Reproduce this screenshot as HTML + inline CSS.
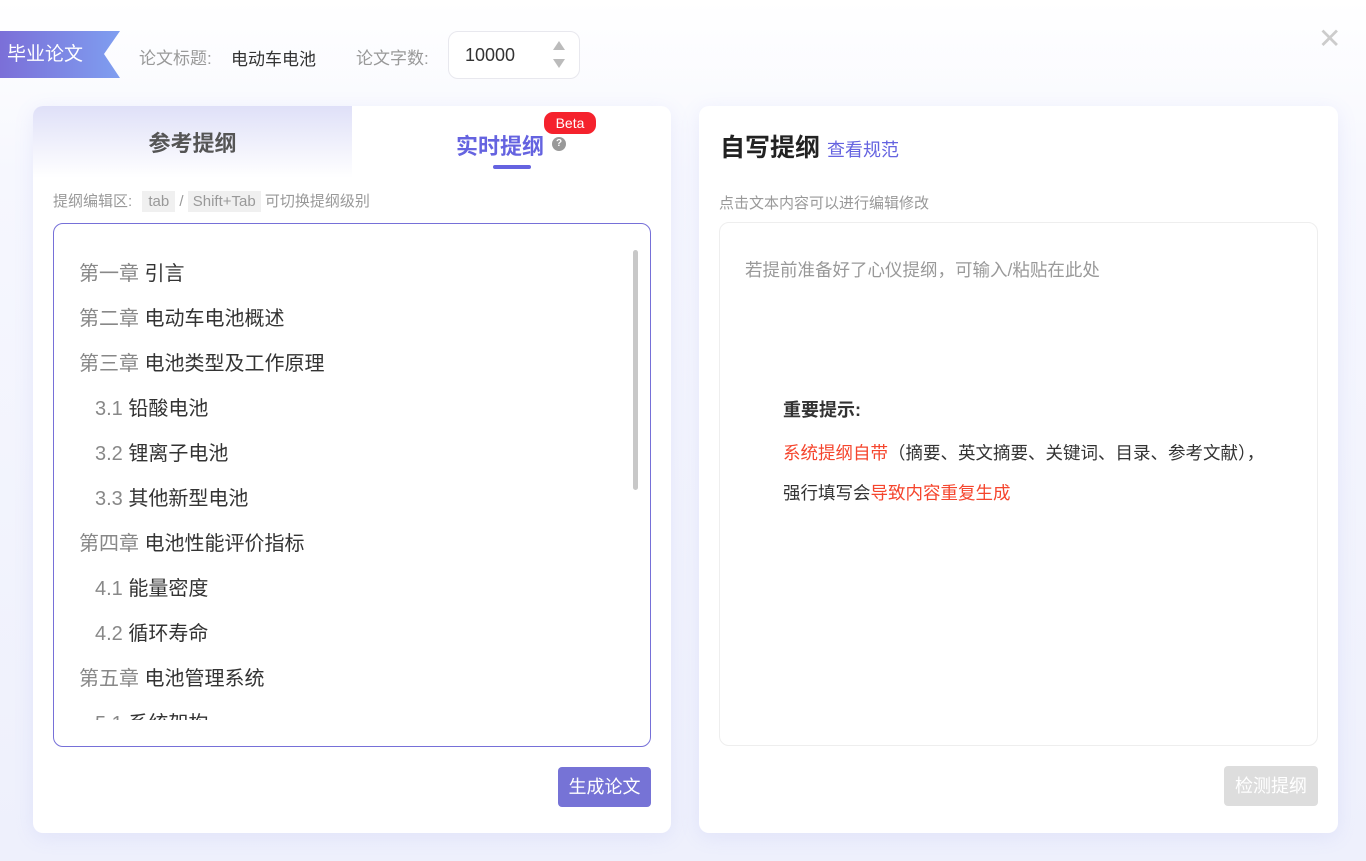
<!DOCTYPE html>
<html><head><meta charset="utf-8"><style>
*{margin:0;padding:0;box-sizing:border-box}
body{width:1366px;height:861px;overflow:hidden;font-family:"Liberation Sans","Noto Sans CJK SC",sans-serif;background:linear-gradient(180deg,#fff 0%,#f6f7fe 20%,#eef0fc 100%);position:relative;color:#333}
.abs{position:absolute}
.tag{left:0;top:31px;width:120px;height:47px;background:linear-gradient(90deg,#7b6fd8,#7f9ef0);color:#fff;font-size:19px;line-height:47px;padding-left:7px;clip-path:polygon(0 0,120px 0,104px 23px,120px 47px,0 47px)}
.lbl{font-size:17px;color:#999;top:44px}
.panel{background:#fff;border-radius:10px;box-shadow:0 4px 20px rgba(120,130,230,.12)}
.line{position:absolute;left:25px;font-size:20px;color:#333}
.line span{color:#888}
.sub{left:41px}
</style></head><body>
<div class="abs tag">毕业论文</div>
<div class="abs lbl" style="left:139px">论文标题:</div>
<div class="abs" style="left:231px;top:45px;font-size:17px;color:#333">电动车电池</div>
<div class="abs lbl" style="left:356px">论文字数:</div>
<div class="abs" style="left:448px;top:31px;width:132px;height:48px;border:1px solid #e8e8ee;border-radius:10px;background:#fff">
 <div class="abs" style="left:16px;top:13px;font-size:18px;color:#333">10000</div>
 <div class="abs" style="left:104px;top:9px;width:0;height:0;border:6px solid transparent;border-bottom:9px solid #bbb;border-top:0"></div>
 <div class="abs" style="left:104px;top:27px;width:0;height:0;border:6px solid transparent;border-top:9px solid #bbb;border-bottom:0"></div>
</div>
<div class="abs" style="left:1318px;top:28px;font-size:28px;color:#ccc;line-height:22px">✕</div>

<div class="abs panel" style="left:33px;top:106px;width:638px;height:727px;overflow:hidden">
 <div class="abs" style="left:0;top:0;width:319px;height:72px;background:linear-gradient(180deg,#dfe0f8,#fff);font-size:22px;font-weight:bold;color:#555;text-align:center;line-height:76px">参考提纲</div>
 <div class="abs" style="left:423px;top:23px;font-size:22px;font-weight:bold;color:#6563e0">实时提纲</div>
 <div class="abs" style="left:519px;top:31px;width:14px;height:14px;border-radius:50%;background:#999;color:#fff;font-size:10px;text-align:center;line-height:14px;font-weight:bold">?</div>
 <div class="abs" style="left:511px;top:6px;width:52px;height:22px;border-radius:9px;background:#f5222d;color:#fff;font-size:14px;text-align:center;line-height:22px">Beta</div>
 <div class="abs" style="left:460px;top:59px;width:38px;height:4px;border-radius:2px;background:#6563e0"></div>
 <div class="abs" style="left:20px;top:86px;font-size:15px;color:#999;line-height:20px">提纲编辑区: <span style="background:#f0f0f0;padding:2px 6px;margin-left:6px">tab</span> / <span style="background:#f0f0f0;padding:2px 5px">Shift+Tab</span> 可切换提纲级别</div>
 <div class="abs" style="left:20px;top:117px;width:598px;height:524px;border:1px solid #7670d8;border-radius:10px;overflow:hidden">
  <div class="abs" style="right:12px;top:26px;width:5px;height:240px;border-radius:3px;background:#c8c8c8"></div>
  <div class="abs" style="left:0;top:0;width:570px;height:496px;overflow:hidden">
  <div class="line" style="top:33px"><span>第一章</span> 引言</div>
  <div class="line" style="top:78px"><span>第二章</span> 电动车电池概述</div>
  <div class="line" style="top:123px"><span>第三章</span> 电池类型及工作原理</div>
  <div class="line sub" style="top:168px"><span>3.1</span> 铅酸电池</div>
  <div class="line sub" style="top:213px"><span>3.2</span> 锂离子电池</div>
  <div class="line sub" style="top:258px"><span>3.3</span> 其他新型电池</div>
  <div class="line" style="top:303px"><span>第四章</span> 电池性能评价指标</div>
  <div class="line sub" style="top:348px"><span>4.1</span> 能量密度</div>
  <div class="line sub" style="top:393px"><span>4.2</span> 循环寿命</div>
  <div class="line" style="top:438px"><span>第五章</span> 电池管理系统</div>
  <div class="line sub" style="top:483px"><span>5.1</span> 系统架构</div>
  </div>
 </div>
 <div class="abs" style="left:525px;top:661px;width:93px;height:40px;border-radius:4px;background:#7673d6;color:#fff;font-size:18px;text-align:center;line-height:40px">生成论文</div>
</div>

<div class="abs panel" style="left:699px;top:106px;width:639px;height:727px">
 <div class="abs" style="left:21px;top:22px;font-size:25px;font-weight:bold;color:#222">自写提纲 <span style="font-size:18px;font-weight:normal;color:#6563e0">查看规范</span></div>
 <div class="abs" style="left:20px;top:86px;font-size:15px;color:#999">点击文本内容可以进行编辑修改</div>
 <div class="abs" style="left:20px;top:116px;width:599px;height:524px;border:1px solid #eee;border-radius:10px">
  <div class="abs" style="left:25px;top:34px;font-size:17.5px;color:#999">若提前准备好了心仪提纲，可输入/粘贴在此处</div>
  <div class="abs" style="left:63px;top:173px;font-size:18px;font-weight:bold;color:#333">重要提示:</div>
  <div class="abs" style="left:63px;top:217px;font-size:17.5px;color:#333"><span style="color:#f5452d">系统提纲自带</span>（摘要、英文摘要、关键词、目录、参考文献），</div>
  <div class="abs" style="left:63px;top:257px;font-size:17.5px;color:#333">强行填写会<span style="color:#f5452d">导致内容重复生成</span></div>
 </div>
 <div class="abs" style="left:525px;top:660px;width:94px;height:40px;border-radius:4px;background:#ddd;color:#fff;font-size:18px;text-align:center;line-height:40px">检测提纲</div>
</div>
</body></html>
